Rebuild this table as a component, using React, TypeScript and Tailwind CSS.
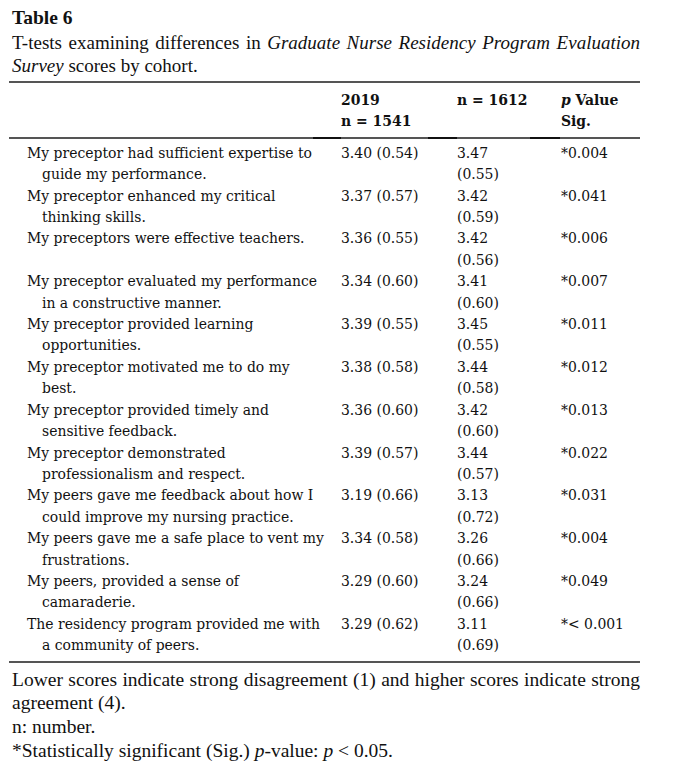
const rows: { a: string; b: string; m: string; sd: string; m2: string; sd2: string; p: string }[] = [
  { a: 'My preceptor had sufficient expertise to', b: 'guide my performance.', m: '3.40', sd: '(0.54)', m2: '3.47', sd2: '(0.55)', p: '*0.004' },
  { a: 'My preceptor enhanced my critical', b: 'thinking skills.', m: '3.37', sd: '(0.57)', m2: '3.42', sd2: '(0.59)', p: '*0.041' },
  { a: 'My preceptors were effective teachers.', b: '', m: '3.36', sd: '(0.55)', m2: '3.42', sd2: '(0.56)', p: '*0.006' },
  { a: 'My preceptor evaluated my performance', b: 'in a constructive manner.', m: '3.34', sd: '(0.60)', m2: '3.41', sd2: '(0.60)', p: '*0.007' },
  { a: 'My preceptor provided learning', b: 'opportunities.', m: '3.39', sd: '(0.55)', m2: '3.45', sd2: '(0.55)', p: '*0.011' },
  { a: 'My preceptor motivated me to do my', b: 'best.', m: '3.38', sd: '(0.58)', m2: '3.44', sd2: '(0.58)', p: '*0.012' },
  { a: 'My preceptor provided timely and', b: 'sensitive feedback.', m: '3.36', sd: '(0.60)', m2: '3.42', sd2: '(0.60)', p: '*0.013' },
  { a: 'My preceptor demonstrated', b: 'professionalism and respect.', m: '3.39', sd: '(0.57)', m2: '3.44', sd2: '(0.57)', p: '*0.022' },
  { a: 'My peers gave me feedback about how I', b: 'could improve my nursing practice.', m: '3.19', sd: '(0.66)', m2: '3.13', sd2: '(0.72)', p: '*0.031' },
  { a: 'My peers gave me a safe place to vent my', b: 'frustrations.', m: '3.34', sd: '(0.58)', m2: '3.26', sd2: '(0.66)', p: '*0.004' },
  { a: 'My peers, provided a sense of', b: 'camaraderie.', m: '3.29', sd: '(0.60)', m2: '3.24', sd2: '(0.66)', p: '*0.049' },
  { a: 'The residency program provided me with', b: 'a community of peers.', m: '3.29', sd: '(0.62)', m2: '3.11', sd2: '(0.69)', p: '*< 0.001' },
];

const serif = "font-['Liberation_Serif',serif]";
const tableFont = "font-['DejaVu_Serif_Condensed','DejaVu_Serif',serif]";

export default function App() {
  return (
    <div className="w-[684px] h-[778px] bg-white text-[#111]">
      <div className={`ml-[9px] w-[631px] ${serif}`}>
        <div className="pl-[3px] pt-[6px] text-[19.5px] leading-[23px] font-bold">Table 6</div>
        <p className="pl-[3px] mt-[2px] text-[19px] leading-[23px] text-justify">
          T-tests examining differences in <i>Graduate Nurse Residency Program Evaluation Survey</i> scores by cohort.
        </p>

        <div className={`mt-[4px] ${tableFont} text-[15.5px] leading-[21.4px]`}>
          <div className="h-[2px] bg-[#555]" />
          <div className="grid grid-cols-[332px_116px_104px_1fr] pt-[6px] pb-[5px] font-bold">
            <div />
            <div>
              <div>2019</div>
              <div>n = 1541</div>
            </div>
            <div>n = 1612</div>
            <div>
              <div>
                <i>p</i> Value
              </div>
              <div>Sig.</div>
            </div>
          </div>
          <div className="flex h-[2px]">
            <div className="w-[304px] bg-[#555]" />
            <div className="w-[28px] bg-[#111]" />
            <div className="w-[87px] bg-[#555]" />
            <div className="w-[29px] bg-[#111]" />
            <div className="w-[73px] bg-[#555]" />
            <div className="w-[30px] bg-[#111]" />
            <div className="flex-1 bg-[#555]" />
          </div>

          <div className="pt-[4px] pb-[4px]">
            {rows.map((r) => (
              <div key={r.a} className="grid grid-cols-[332px_116px_104px_1fr]">
                <div className="pl-[18px]">
                  <div className="whitespace-nowrap">{r.a}</div>
                  <div className="pl-[15px] whitespace-nowrap">{r.b || '\u00a0'}</div>
                </div>
                <div className="whitespace-nowrap">
                  {r.m} {r.sd}
                </div>
                <div>
                  <div>{r.m2}</div>
                  <div>{r.sd2}</div>
                </div>
                <div className="whitespace-nowrap">{r.p}</div>
              </div>
            ))}
          </div>
          <div className="h-[2px] bg-[#555]" />
        </div>

        <div className="pl-[3px] pt-[5px] text-[19.5px] leading-[23.8px]">
          <p className="text-justify">
            Lower scores indicate strong disagreement (1) and higher scores indicate strong agreement (4).
          </p>
          <p>n: number.</p>
          <p>
            *Statistically significant (Sig.) <i>p</i>-value: <i>p</i> &lt; 0.05.
          </p>
        </div>
      </div>
    </div>
  );
}
